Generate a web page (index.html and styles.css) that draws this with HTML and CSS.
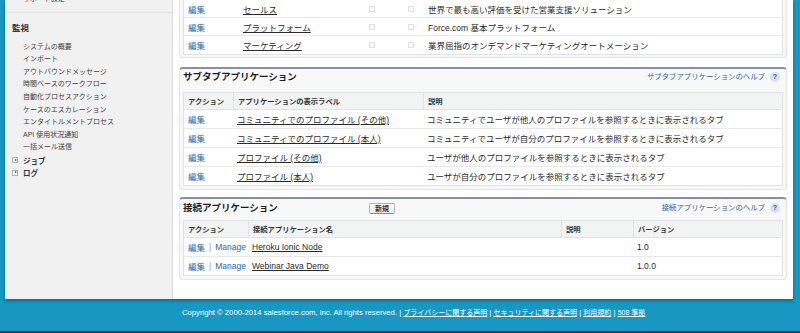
FILE: index.html
```html
<!DOCTYPE html>
<html lang="ja">
<head>
    <meta charset="UTF-8">
    <meta name="viewport" content="width=device-width, initial-scale=1.0">
    <title>アプリケーション</title>
    <link rel="stylesheet" href="styles.css">
</head>
<body>
<div class="page">
    <div class="panel">

        <!-- Setup sidebar -->
        <aside class="sidebar">
            <div class="side-cut">
                <div class="side-item">サポート設定</div>
            </div>
            <h3 class="side-title">監視</h3>
            <ul class="side-list">
                <li>システムの概要</li>
                <li>インポート</li>
                <li>アウトバウンドメッセージ</li>
                <li>時間ベースのワークフロー</li>
                <li>自動化プロセスアクション</li>
                <li>ケースのエスカレーション</li>
                <li>エンタイトルメントプロセス</li>
                <li>API 使用状況通知</li>
                <li>一括メール送信</li>
            </ul>
            <div class="side-folder"><span class="twist"></span>ジョブ</div>
            <div class="side-folder"><span class="twist"></span>ログ</div>
        </aside>

        <main class="content">

            <!-- Apps (continued from above) -->
            <section class="block block-cut">
                <div class="list list-cut">
                    <div class="row cols-apps">
                        <span><a class="link" href="#">編集</a></span>
                        <span><a class="name" href="#">セールス</a></span>
                        <span><i class="check"></i></span>
                        <span><i class="check"></i></span>
                        <span>世界で最も高い評価を受けた営業支援ソリューション</span>
                    </div>
                    <div class="row cols-apps">
                        <span><a class="link" href="#">編集</a></span>
                        <span><a class="name" href="#">プラットフォーム</a></span>
                        <span><i class="check"></i></span>
                        <span><i class="check"></i></span>
                        <span>Force.com 基本プラットフォーム</span>
                    </div>
                    <div class="row cols-apps">
                        <span><a class="link" href="#">編集</a></span>
                        <span><a class="name" href="#">マーケティング</a></span>
                        <span><i class="check"></i></span>
                        <span><i class="check"></i></span>
                        <span>業界屈指のオンデマンドマーケティングオートメーション</span>
                    </div>
                </div>
            </section>

            <!-- Subtab apps -->
            <section class="block">
                <div class="block-head head-tall">
                    <h2 class="block-title">サブタブアプリケーション</h2>
                    <a class="help" href="#">サブタブアプリケーションのヘルプ<span class="help-icon">?</span></a>
                </div>
                <div class="list">
                    <div class="row head-row cols-subtab">
                        <span>アクション</span>
                        <span>アプリケーションの表示ラベル</span>
                        <span>説明</span>
                    </div>
                    <div class="row cols-subtab">
                        <span><a class="link" href="#">編集</a></span>
                        <span><a class="name" href="#">コミュニティでのプロファイル (その他)</a></span>
                        <span>コミュニティでユーザが他人のプロファイルを参照するときに表示されるタブ</span>
                    </div>
                    <div class="row cols-subtab">
                        <span><a class="link" href="#">編集</a></span>
                        <span><a class="name" href="#">コミュニティでのプロファイル (本人)</a></span>
                        <span>コミュニティでユーザが自分のプロファイルを参照するときに表示されるタブ</span>
                    </div>
                    <div class="row cols-subtab">
                        <span><a class="link" href="#">編集</a></span>
                        <span><a class="name" href="#">プロファイル (その他)</a></span>
                        <span>ユーザが他人のプロファイルを参照するときに表示されるタブ</span>
                    </div>
                    <div class="row cols-subtab">
                        <span><a class="link" href="#">編集</a></span>
                        <span><a class="name" href="#">プロファイル (本人)</a></span>
                        <span>ユーザが自分のプロファイルを参照するときに表示されるタブ</span>
                    </div>
                </div>
            </section>

            <!-- Connected apps -->
            <section class="block">
                <div class="block-head">
                    <h2 class="block-title">接続アプリケーション</h2>
                    <button class="btn" type="button">新規</button>
                    <a class="help" href="#">接続アプリケーションのヘルプ<span class="help-icon">?</span></a>
                </div>
                <div class="list">
                    <div class="row head-row cols-connected">
                        <span>アクション</span>
                        <span>接続アプリケーション名</span>
                        <span>説明</span>
                        <span>バージョン</span>
                    </div>
                    <div class="row cols-connected">
                        <span><a class="link" href="#">編集</a><span class="sep">|</span><a class="link" href="#">Manage</a></span>
                        <span><a class="name" href="#">Heroku Ionic Node</a></span>
                        <span></span>
                        <span>1.0</span>
                    </div>
                    <div class="row cols-connected">
                        <span><a class="link" href="#">編集</a><span class="sep">|</span><a class="link" href="#">Manage</a></span>
                        <span><a class="name" href="#">Webinar Java Demo</a></span>
                        <span></span>
                        <span>1.0.0</span>
                    </div>
                </div>
            </section>

        </main>
    </div>

    <footer class="footer">
        Copyright © 2000-2014 salesforce.com, inc. All rights reserved. |
        <a href="#">プライバシーに関する声明</a> |
        <a href="#">セキュリティに関する声明</a> |
        <a href="#">利用規約</a> |
        <a href="#">508 準拠</a>
    </footer>
    <div class="bottom-bar"></div>
</div>
</body>
</html>
```

FILE: styles.css
```css
* {
    box-sizing: border-box;
}
body {
    margin: 0;
    background-color: #1797c1;
    font-family: "Liberation Sans", "Noto Sans CJK JP", sans-serif;
    color: #2a2a2a;
}
a {
    text-decoration: none;
}
.page {
    height: 333px;
    overflow: hidden;
    display: flex;
    flex-direction: column;
}
.panel {
    margin: 0 7px 0 5px;
    background-color: #fff;
    display: flex;
    box-shadow: 0 2px 3px rgba(0, 0, 0, 0.3);
}

/* sidebar */
.sidebar {
    flex: none;
    width: 168px;
    background-color: #f1f1f1;
    border-right: 1px solid #dadada;
}
.side-cut {
    margin-top: -7px;
    padding-bottom: 6px;
    border-bottom: 1px solid #dedede;
}
.side-item,
.side-list li {
    padding-left: 18px;
    font-size: 7px;
    line-height: 12.6px;
    height: 12.6px;
    color: #3c3c3c;
}
.side-title {
    margin: 0;
    padding: 9px 0 0 7px;
    font-size: 8.5px;
    line-height: 12px;
    color: #333;
}
.side-list {
    list-style: none;
    margin: 0;
    padding: 7px 0 0;
}
.side-folder {
    display: flex;
    align-items: center;
    height: 12.6px;
    padding-left: 7px;
    font-size: 7.5px;
    font-weight: bold;
    color: #333;
}
.twist {
    position: relative;
    width: 6px;
    height: 6px;
    margin-right: 5px;
    border: 1px solid #b0b0b0;
    background-color: #fff;
}
.twist::after {
    content: "";
    position: absolute;
    left: 1.5px;
    top: 0.5px;
    border-left: 2px solid #333;
    border-top: 1.5px solid transparent;
    border-bottom: 1.5px solid transparent;
}

/* main blocks */
.content {
    flex: 1;
    padding: 0 6px 19px;
}
.block {
    margin-top: 7px;
    padding: 0 3px 3px;
    background-color: #f8f8f8;
    border: 1px solid #e4e4e4;
    border-top: 2px solid #8790a6;
    border-radius: 4px;
}
.block-cut {
    margin-top: 0;
    padding-bottom: 2px;
    border-top: none;
    border-radius: 0 0 4px 4px;
}
.block-cut + .block {
    margin-top: 9px;
}
.block-head {
    display: flex;
    align-items: flex-start;
    height: 21px;
    padding-top: 3px;
}
.head-tall {
    height: 23px;
    padding-top: 2px;
}
.block-title {
    width: 186px;
    margin: 0;
    font-size: 9.5px;
    line-height: 12px;
    color: #1e1e1e;
}
.btn {
    height: 11px;
    margin-top: 1px;
    padding: 0 5px;
    font-family: inherit;
    font-size: 7px;
    font-weight: bold;
    line-height: 9px;
    color: #333;
    border: 1px solid #b5b5b5;
    border-bottom-color: #8c8c8c;
    border-radius: 2px;
    background: linear-gradient(#fff, #e9e9e9);
}
.help {
    margin-left: auto;
    margin-right: 3px;
    display: flex;
    align-items: center;
    font-size: 7.4px;
    line-height: 12px;
    color: #2b65a8;
}
.help-icon {
    width: 10px;
    height: 10px;
    margin-left: 5px;
    border-radius: 50%;
    background-color: #d6e2ef;
    color: #1f5ea6;
    font-size: 7px;
    font-weight: bold;
    line-height: 10px;
    text-align: center;
}

/* lists */
.list {
    background-color: #fff;
    border: 1px solid #e0e3e5;
}
.list-cut {
    border-top: none;
}
.row {
    display: grid;
    align-items: center;
    height: 19px;
    border-bottom: 1px solid #e8e8e8;
    font-size: 8.5px;
    white-space: nowrap;
}
.row:last-child {
    height: 18px;
    border-bottom: none;
}
.list-cut .row {
    height: 18px;
}
.row > span {
    padding-left: 4px;
    display: flex;
    align-items: center;
}
.head-row {
    height: 17px;
    align-items: stretch;
    background-color: #f2f3f3;
    border-bottom: 1px solid #e0e3e5;
    font-size: 7.3px;
    font-weight: bold;
    color: #333;
}
.head-row > span + span {
    border-left: 1px solid #e0e3e5;
}
.cols-apps {
    grid-template-columns: 55px 126px 39px 20px 1fr;
}
.cols-subtab {
    grid-template-columns: 49px 190px 1fr;
}
.cols-connected {
    grid-template-columns: 64px 313px 72px 1fr;
}
.link {
    color: #2b65a8;
}
.name {
    color: #2a2a2a;
    text-decoration: underline;
}
.sep {
    margin: 0 4px;
    color: #999;
}
.check {
    width: 6px;
    height: 6px;
    border: 1px solid #dedede;
    background-color: #fafafa;
}

/* footer */
.footer {
    height: 33px;
    padding: 8px 0 0 182px;
    font-size: 7.7px;
    line-height: 12px;
    color: #fff;
    white-space: nowrap;
}
.footer a {
    font-size: 7px;
    color: #fff;
    text-decoration: underline;
}
.bottom-bar {
    height: 2px;
    background-color: #0c3a50;
}
```
